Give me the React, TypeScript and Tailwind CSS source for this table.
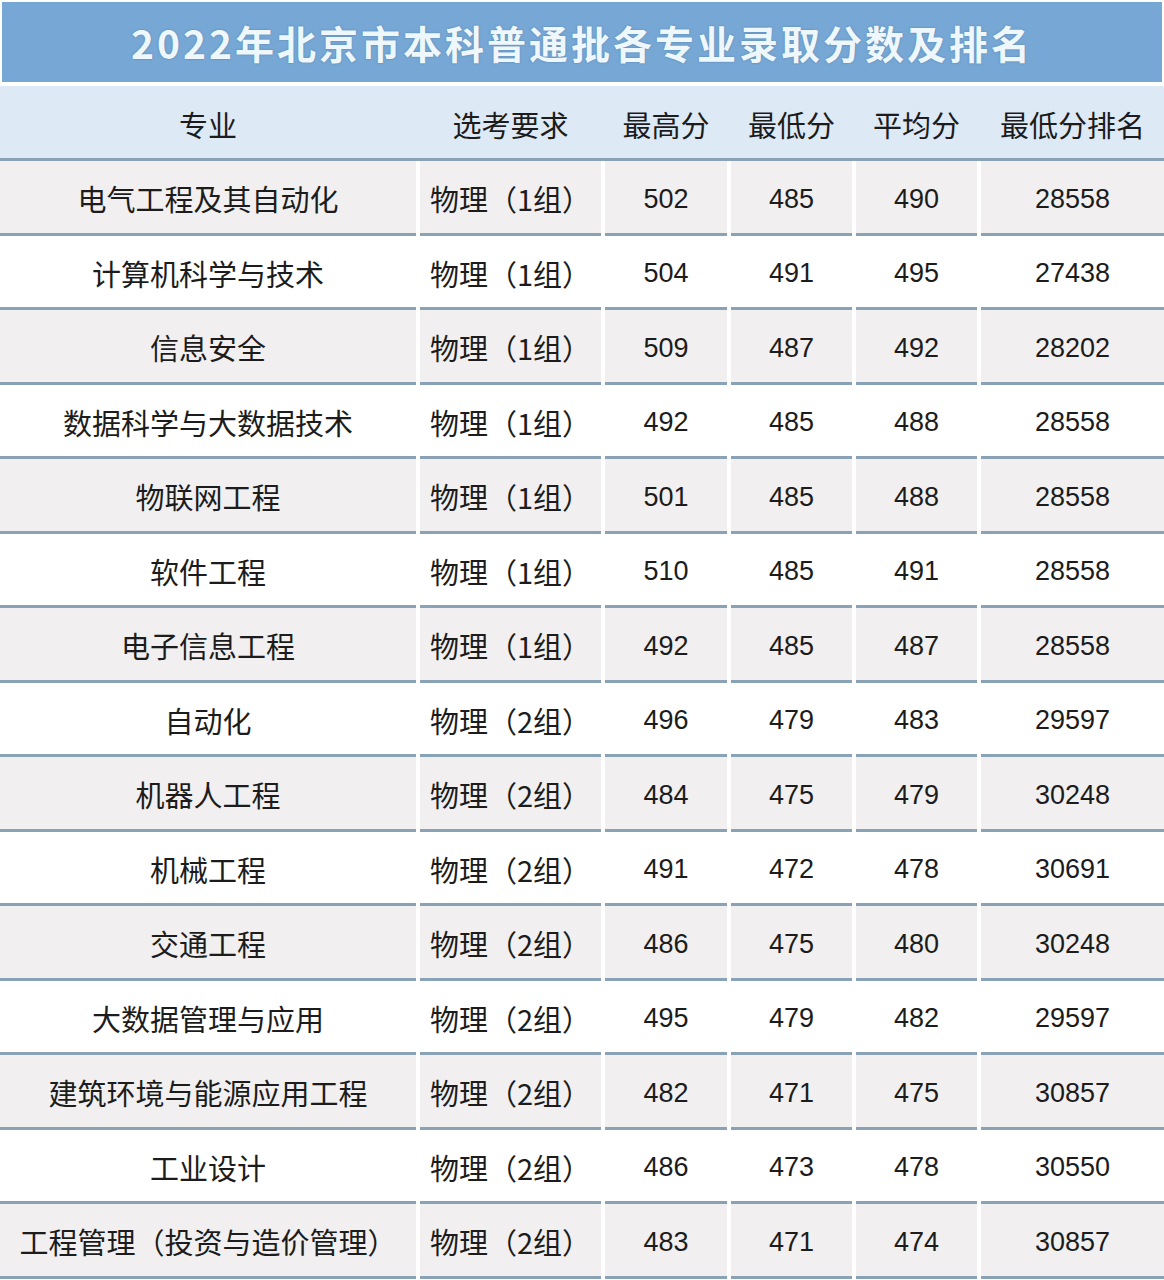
const rows: [string, string, number, number, number, number][] = [
  ["电气工程及其自动化", "物理（1组）", 502, 485, 490, 28558],
  ["计算机科学与技术", "物理（1组）", 504, 491, 495, 27438],
  ["信息安全", "物理（1组）", 509, 487, 492, 28202],
  ["数据科学与大数据技术", "物理（1组）", 492, 485, 488, 28558],
  ["物联网工程", "物理（1组）", 501, 485, 488, 28558],
  ["软件工程", "物理（1组）", 510, 485, 491, 28558],
  ["电子信息工程", "物理（1组）", 492, 485, 487, 28558],
  ["自动化", "物理（2组）", 496, 479, 483, 29597],
  ["机器人工程", "物理（2组）", 484, 475, 479, 30248],
  ["机械工程", "物理（2组）", 491, 472, 478, 30691],
  ["交通工程", "物理（2组）", 486, 475, 480, 30248],
  ["大数据管理与应用", "物理（2组）", 495, 479, 482, 29597],
  ["建筑环境与能源应用工程", "物理（2组）", 482, 471, 475, 30857],
  ["工业设计", "物理（2组）", 486, 473, 478, 30550],
  ["工程管理（投资与造价管理）", "物理（2组）", 483, 471, 474, 30857],
];

const cols = "grid grid-cols-[416px_181px_122px_121px_121px_1fr] gap-x-[4px]";
const cjk = "font-['Noto_Sans_CJK_SC','Noto_Sans',sans-serif]";
const num = "font-['Liberation_Sans','Noto_Sans_CJK_SC',sans-serif]";

export default function App() {
  const headers = ["专业", "选考要求", "最高分", "最低分", "平均分", "最低分排名"];
  return (
    <div className="w-[1164px] h-[1280px] bg-white overflow-hidden">
      <div className="pt-[2px] px-[2px]">
        <div className={`h-[80px] bg-[#76a7d5] flex items-center justify-center text-[39px] font-bold tracking-[3px] text-[#eef7fb] ${cjk} [text-shadow:0_0_2px_rgba(60,100,140,0.6)]`}>
          2022年北京市本科普通批各专业录取分数及排名
        </div>
      </div>
      <div className="mt-[4px] h-[75px] bg-[#dee9f6] border-b-[3px] border-[#8aa2b6] grid grid-cols-[416px_181px_122px_121px_121px_1fr] gap-x-[4px]">
        {headers.map((h) => (
          <div key={h} className={`flex items-center justify-center pt-[5px] text-[29px] text-[#1c1c1c] ${cjk}`}>
            {h}
          </div>
        ))}
      </div>
      {rows.map((r, i) => {
        const bg = i % 2 === 0 ? "bg-[#f1eff0]" : "bg-white";
        const cell = `h-[74.5px] ${bg} border-b-[3px] border-[#8aa2b6] flex items-center justify-center pt-[4px] text-[#1c1c1c]`;
        return (
          <div key={i} className={cols}>
            <div className={`${cell} text-[29px] ${cjk}`}>{r[0]}</div>
            <div className={`${cell} text-[29px] ${cjk}`}>{r[1]}</div>
            {r.slice(2).map((v, j) => (
              <div key={j} className={`${cell} text-[27px] ${num}`}>
                {v}
              </div>
            ))}
          </div>
        );
      })}
    </div>
  );
}
